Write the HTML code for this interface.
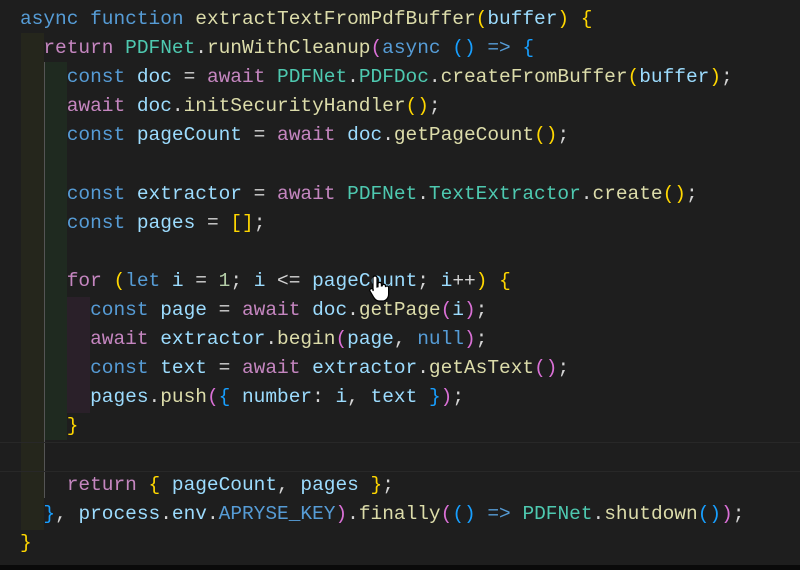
<!DOCTYPE html>
<html><head><style>
body{margin:0;width:800px;height:570px;background:#1e1e1e;overflow:hidden;position:relative}
.code{position:absolute;left:20px;top:5px;font-family:"Liberation Mono",monospace;font-size:19.5px;letter-spacing:-0.02px;line-height:29.1px;color:#d4d4d4;white-space:pre;z-index:2}
.b{position:absolute}
.k{color:#569cd6}.c{color:#c586c0}.f{color:#dcdcaa}.t{color:#4ec9b0}.v{color:#9cdcfe}.y{color:#ffd700}.p{color:#da70d6}.u{color:#179fff}.n{color:#b5cea8}
</style></head><body>
<div class="b" style="left:21px;top:33px;width:23px;height:497px;background:#25261c"></div>
<div class="b" style="left:44px;top:62px;width:23px;height:378px;background:#1f2a20"></div>
<div class="b" style="left:67px;top:297px;width:23px;height:116px;background:#2a2029"></div>
<div class="b" style="left:44px;top:62px;width:1px;height:436px;background:#555"></div>
<div class="b" style="left:0;top:442px;width:800px;height:28px;border-top:1px solid #282828;border-bottom:1px solid #282828"></div>
<div class="b" style="left:0;top:565px;width:800px;height:5px;background:#0a0a0a"></div>
<div class="code"><span class="k">async</span> <span class="k">function</span> <span class="f">extractTextFromPdfBuffer</span><span class="y">(</span><span class="v">buffer</span><span class="y">)</span> <span class="y">{</span>
  <span class="c">return</span> <span class="t">PDFNet</span>.<span class="f">runWithCleanup</span><span class="p">(</span><span class="k">async</span> <span class="u">()</span> <span class="k">=&gt;</span> <span class="u">{</span>
    <span class="k">const</span> <span class="v">doc</span> = <span class="c">await</span> <span class="t">PDFNet</span>.<span class="t">PDFDoc</span>.<span class="f">createFromBuffer</span><span class="y">(</span><span class="v">buffer</span><span class="y">)</span>;
    <span class="c">await</span> <span class="v">doc</span>.<span class="f">initSecurityHandler</span><span class="y">()</span>;
    <span class="k">const</span> <span class="v">pageCount</span> = <span class="c">await</span> <span class="v">doc</span>.<span class="f">getPageCount</span><span class="y">()</span>;

    <span class="k">const</span> <span class="v">extractor</span> = <span class="c">await</span> <span class="t">PDFNet</span>.<span class="t">TextExtractor</span>.<span class="f">create</span><span class="y">()</span>;
    <span class="k">const</span> <span class="v">pages</span> = <span class="y">[]</span>;

    <span class="c">for</span> <span class="y">(</span><span class="k">let</span> <span class="v">i</span> = <span class="n">1</span>; <span class="v">i</span> &lt;= <span class="v">pageCount</span>; <span class="v">i</span>++<span class="y">)</span> <span class="y">{</span>
      <span class="k">const</span> <span class="v">page</span> = <span class="c">await</span> <span class="v">doc</span>.<span class="f">getPage</span><span class="p">(</span><span class="v">i</span><span class="p">)</span>;
      <span class="c">await</span> <span class="v">extractor</span>.<span class="f">begin</span><span class="p">(</span><span class="v">page</span>, <span class="k">null</span><span class="p">)</span>;
      <span class="k">const</span> <span class="v">text</span> = <span class="c">await</span> <span class="v">extractor</span>.<span class="f">getAsText</span><span class="p">()</span>;
      <span class="v">pages</span>.<span class="f">push</span><span class="p">(</span><span class="u">{</span> <span class="v">number</span>: <span class="v">i</span>, <span class="v">text</span> <span class="u">}</span><span class="p">)</span>;
    <span class="y">}</span>

    <span class="c">return</span> <span class="y">{</span> <span class="v">pageCount</span>, <span class="v">pages</span> <span class="y">}</span>;
  <span class="u">}</span>, <span class="v">process</span>.<span class="v">env</span>.<span class="k">APRYSE_KEY</span><span class="p">)</span>.<span class="f">finally</span><span class="p">(</span><span class="u">()</span> <span class="k">=&gt;</span> <span class="t">PDFNet</span>.<span class="f">shutdown</span><span class="u">()</span><span class="p">)</span>;
<span class="y">}</span></div>
<svg class="b" style="left:368px;top:274px;z-index:3" width="24" height="30" viewBox="0 0 24 30"><path d="M7 2c1.3 0 2 .8 2 2v9l1-.2V10c0-1 .8-1.6 1.7-1.6s1.7.6 1.7 1.6v2l.8-.1c0-1 .8-1.5 1.7-1.5s1.6.6 1.6 1.6v1c.3-.8 1-1 1.6-1 .9 0 1.5.6 1.5 1.6V20c0 4-2.5 7-6.5 7h-3c-2.5 0-4-1.4-5.3-3.5L2 17c-.5-1 0-2 1-2.3s1.8.2 2.3 1L5 17V4c0-1.2.7-2 2-2z" fill="#fff" stroke="#000" stroke-width="1.2"/></svg>
</body></html>
